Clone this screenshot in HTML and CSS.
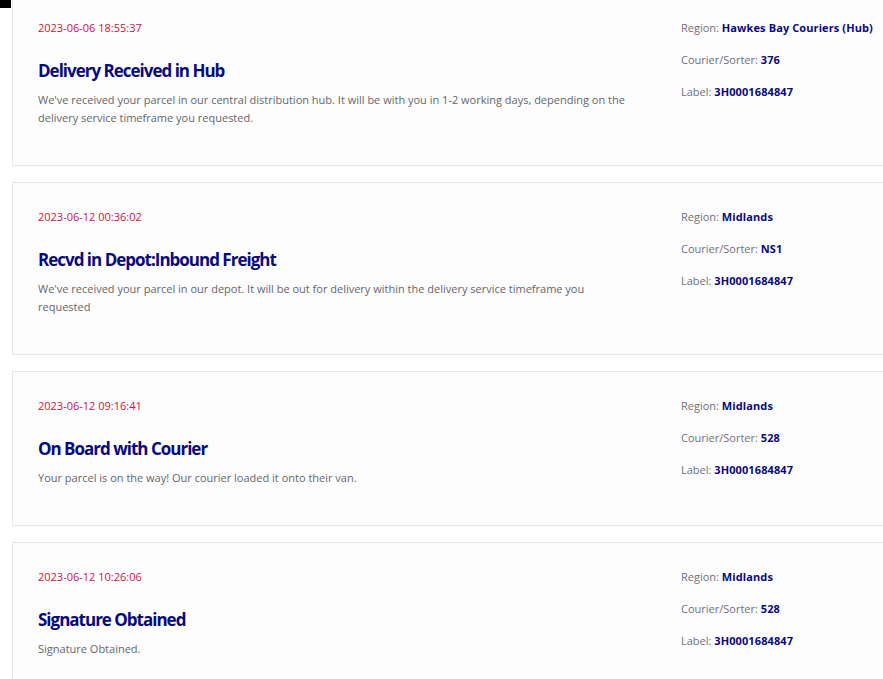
FILE: index.html
```html
<!DOCTYPE html>
<html>
<head>
<meta charset="utf-8">
<link rel="stylesheet" href="styles.css">
</head>
<body>
<div class="corner"></div>
<div class="timeline">
  <div class="event">
    <div class="main">
      <div class="date">2023-06-06 18:55:37</div>
      <h2 class="title">Delivery Received in Hub</h2>
      <p class="desc">We've received your parcel in our central distribution hub. It will be with you in 1-2 working days, depending on the delivery service timeframe you requested.</p>
    </div>
    <div class="meta">
      <p>Region: <b>Hawkes Bay Couriers (Hub)</b></p>
      <p>Courier/Sorter: <b>376</b></p>
      <p>Label: <b>3H0001684847</b></p>
    </div>
  </div>
  <div class="event">
    <div class="main">
      <div class="date">2023-06-12 00:36:02</div>
      <h2 class="title">Recvd in Depot:Inbound Freight</h2>
      <p class="desc">We've received your parcel in our depot. It will be out for delivery within the delivery service timeframe you requested</p>
    </div>
    <div class="meta">
      <p>Region: <b>Midlands</b></p>
      <p>Courier/Sorter: <b>NS1</b></p>
      <p>Label: <b>3H0001684847</b></p>
    </div>
  </div>
  <div class="event">
    <div class="main">
      <div class="date">2023-06-12 09:16:41</div>
      <h2 class="title">On Board with Courier</h2>
      <p class="desc">Your parcel is on the way! Our courier loaded it onto their van.</p>
    </div>
    <div class="meta">
      <p>Region: <b>Midlands</b></p>
      <p>Courier/Sorter: <b>528</b></p>
      <p>Label: <b>3H0001684847</b></p>
    </div>
  </div>
  <div class="event">
    <div class="main">
      <div class="date">2023-06-12 10:26:06</div>
      <h2 class="title">Signature Obtained</h2>
      <p class="desc">Signature Obtained.</p>
    </div>
    <div class="meta">
      <p>Region: <b>Midlands</b></p>
      <p>Courier/Sorter: <b>528</b></p>
      <p>Label: <b>3H0001684847</b></p>
    </div>
  </div>
</div>
</body>
</html>
```
FILE: styles.css
```css
html, body {
  margin: 0;
  padding: 0;
  background: #ffffff;
  overflow: hidden;
}
body {
  font-family: "Open Sans", "Noto Sans", sans-serif;
  width: 883px;
  height: 679px;
  position: relative;
}
.corner {
  position: absolute;
  left: 0;
  top: 0;
  width: 11px;
  height: 8px;
  background: #000;
  z-index: 2;
}
.timeline {
  margin-top: -7px;
  padding-left: 12px;
  display: flex;
  flex-direction: column;
  gap: 16px;
  width: 960px;
}
.event {
  display: flex;
  border: 1px solid #e4e4ef;
  background: #fdfdfe;
  padding: 26px 0 38px 25px;
}
.main {
  width: 592px;
  flex: none;
}
.date {
  font-size: 11px;
  line-height: 16px;
  color: #d3103f;
}
.title {
  margin: 23px 0 0;
  font-size: 17px;
  line-height: 24px;
  font-weight: 700;
  letter-spacing: -1px;
  color: #09097f;
}
.desc {
  margin: 8px 0 0;
  font-size: 11px;
  line-height: 18px;
  color: #65656c;
}
.meta {
  margin-left: 51px;
  display: flex;
  flex-direction: column;
  gap: 16px;
}
.meta p {
  margin: 0;
  font-size: 11px;
  line-height: 16px;
  color: #707078;
  white-space: nowrap;
}
.meta b {
  color: #09097f;
  font-weight: 700;
  letter-spacing: 0.1px;
}
```
